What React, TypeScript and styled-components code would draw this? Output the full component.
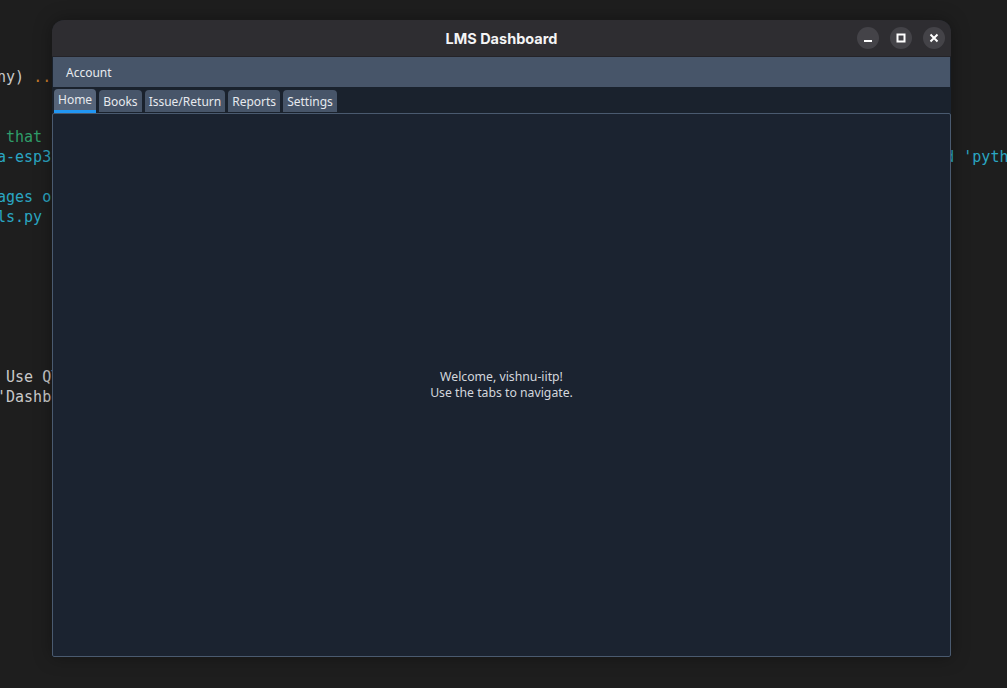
import React from "react";
import styled, { createGlobalStyle } from "styled-components";

const Global = createGlobalStyle`
  html, body { margin: 0; padding: 0; background: #1e1e1e; }
  body { width: 1007px; height: 688px; overflow: hidden; }
`;

const Desktop = styled.div`
  position: relative;
  width: 1007px;
  height: 688px;
  overflow: hidden;
  background: #1e1e1e;
`;

const Code = styled.pre`
  margin: 0 0 0 -3px;
  padding-top: 67px;
  font-family: "DejaVu Sans Mono", "Liberation Mono", monospace;
  font-size: 15px;
  line-height: 20px;
  color: #c9c9c9;
  white-space: pre;
`;

const Tok = styled.span<{ $c: string }>`
  color: ${(p) => p.$c};
`;

const Window = styled.div`
  position: absolute;
  left: 52px;
  top: 20px;
  width: 899px;
  height: 637px;
  display: flex;
  flex-direction: column;
  border-radius: 12px 12px 2px 2px;
  overflow: hidden;
  background: #1a222d;
  box-shadow: 0 0 18px rgba(0, 0, 0, 0.35);
  font-family: "Noto Sans", sans-serif;
`;

const TitleBar = styled.div`
  position: relative;
  height: 36px;
  flex: none;
  display: flex;
  align-items: center;
  justify-content: center;
  background: #2e2d31;
  border-bottom: 1px solid #242328;
`;

const Title = styled.div`
  font-family: "Inter", "Noto Sans", sans-serif;
  font-weight: 700;
  font-size: 14.5px;
  color: #f4f4f5;
`;

const Controls = styled.div`
  position: absolute;
  right: 6px;
  top: 7px;
  display: flex;
  gap: 11px;
`;

const CtlButton = styled.div`
  width: 22px;
  height: 22px;
  border-radius: 50%;
  background: #444348;
  display: flex;
  align-items: center;
  justify-content: center;
`;

const MenuBar = styled.div`
  height: 30px;
  flex: none;
  display: flex;
  align-items: center;
  background: #475569;
  margin: 0 1px;
  padding-left: 13px;
  font-size: 12px;
  color: #e8ebef;
`;

const TabBar = styled.div`
  height: 26px;
  flex: none;
  display: flex;
  align-items: flex-end;
  gap: 3px;
  padding-left: 2px;
`;

const Tab = styled.div<{ $active?: boolean }>`
  height: ${(p) => (p.$active ? 24 : 22)}px;
  margin-bottom: ${(p) => (p.$active ? 0 : 1)}px;
  padding: ${(p) => (p.$active ? "2px" : "0")} 4px 0;
  box-sizing: border-box;
  display: flex;
  align-items: ${(p) => (p.$active ? "flex-start" : "center")};
  border-radius: 4px 4px 0 0;
  background: ${(p) => (p.$active ? "#566479" : "#475569")};
  color: #e6e9ee;
  font-size: 12px;
  border-bottom: ${(p) => (p.$active ? "3px solid #2196f3" : "none")};
`;

const Pane = styled.div`
  flex: 1;
  display: flex;
  flex-direction: column;
  align-items: center;
  justify-content: center;
  background: #1b2330;
  border: 1px solid #4a5a6f;
  border-radius: 2px;
  font-size: 12.25px;
  line-height: 16px;
  color: #d3d7dd;
  text-align: center;
`;

const Line = styled.div``;

const pad = (n: number) => " ".repeat(n);

export default function App() {
  return (
    <Desktop>
      <Global />
      <Code>
        {"ny) "}
        <Tok $c="#c8782a">..</Tok>
        {"\n\n\n"}
        <Tok $c="#2f9d6a">{" that a"}</Tok>
        {"\n"}
        <Tok $c="#2aa6c2">{"a-esp32"}</Tok>
        {pad(98)}
        <Tok $c="#2aa6c2">{"d 'python"}</Tok>
        {"\n\n"}
        <Tok $c="#2aa6c2">{"ages of"}</Tok>
        {"\n"}
        <Tok $c="#2aa6c2">{"ls.py ("}</Tok>
        {"\n\n\n\n\n\n\n\n"}
        {" Use QT\n"}
        {"'Dashbo"}
      </Code>
      <Window>
        <TitleBar>
          <Title>LMS Dashboard</Title>
          <Controls>
            <CtlButton>
              <svg width="10" height="10" viewBox="0 0 10 10">
                <rect x="1" y="7" width="8" height="2" fill="#fff" />
              </svg>
            </CtlButton>
            <CtlButton>
              <svg width="10" height="10" viewBox="0 0 10 10">
                <rect x="1.5" y="1.5" width="7" height="7" fill="none" stroke="#fff" strokeWidth="2" />
              </svg>
            </CtlButton>
            <CtlButton>
              <svg width="10" height="10" viewBox="0 0 10 10">
                <path d="M1.5 1.5 L8.5 8.5 M8.5 1.5 L1.5 8.5" stroke="#fff" strokeWidth="2" />
              </svg>
            </CtlButton>
          </Controls>
        </TitleBar>
        <MenuBar>Account</MenuBar>
        <TabBar>
          <Tab $active>Home</Tab>
          <Tab>Books</Tab>
          <Tab>Issue/Return</Tab>
          <Tab>Reports</Tab>
          <Tab>Settings</Tab>
        </TabBar>
        <Pane>
          <Line>Welcome, vishnu-iitp!</Line>
          <Line>Use the tabs to navigate.</Line>
        </Pane>
      </Window>
    </Desktop>
  );
}
